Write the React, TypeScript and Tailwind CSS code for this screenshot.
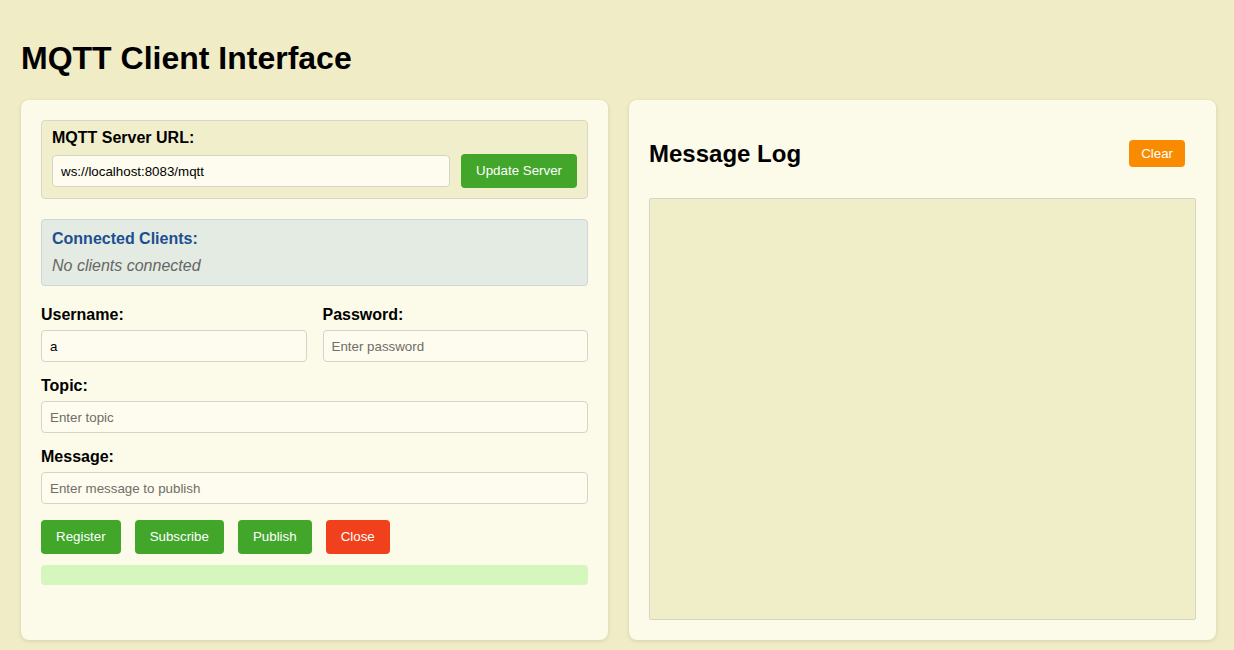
import React from "react"

const font = { fontFamily: '"Liberation Sans", Arial, sans-serif' }

function Field({ label, placeholder, value }: { label: string; placeholder?: string; value?: string }) {
  return (
    <div className="flex flex-col">
      <label className="text-[16px] font-bold leading-[18px] text-black">{label}</label>
      <input
        className="mt-[6px] h-[32px] rounded-[4px] border border-[#d6d4c6] bg-[#fdfcee] px-[8px] text-[13.33px] text-black outline-none placeholder:text-[#6f6e68]"
        placeholder={placeholder}
        defaultValue={value}
      />
    </div>
  )
}

export default function App() {
  const actions = [
    { label: "Register", color: "bg-[#41a62a]" },
    { label: "Subscribe", color: "bg-[#41a62a]" },
    { label: "Publish", color: "bg-[#41a62a]" },
    { label: "Close", color: "bg-[#f0401c]" },
  ]

  return (
    <div className="min-h-[650px] bg-[#efecc6] pl-[21px] pr-[18px] pt-[40px] pb-[11px] text-black" style={font}>
      <h1 className="mb-[23px] text-[32px] font-bold leading-[37px]">MQTT Client Interface</h1>

      <div className="grid grid-cols-2 gap-[21px]">
        {/* Left: connection + publish form */}
        <div className="rounded-[8px] bg-[#fcfbe9] p-[20px] shadow-[0_1px_4px_rgba(0,0,0,0.12)]">
          <div className="rounded-[4px] border border-[#d9d7c9] bg-[#f1eecb] px-[10px] pt-[8px] pb-[10px]">
            <div className="text-[16px] font-bold leading-[18px]">MQTT Server URL:</div>
            <div className="mt-[7px] flex items-center gap-[11px]">
              <input
                className="h-[32px] flex-1 rounded-[4px] border border-[#d6d4c6] bg-[#fdfcee] px-[8px] text-[13.33px] text-black outline-none"
                defaultValue="ws://localhost:8083/mqtt"
              />
              <button className="h-[34px] rounded-[4px] bg-[#41a62a] px-[15px] text-[13.33px] text-white">
                Update Server
              </button>
            </div>
          </div>

          <div className="mt-[20px] rounded-[4px] border border-[#ccd6da] bg-[#e3ebe2] px-[10px] pt-[10px] pb-[10px]">
            <div className="text-[16px] font-bold leading-[18px] text-[#1d4f91]">Connected Clients:</div>
            <div className="mt-[9px] text-[16px] italic leading-[18px] text-[#666]">No clients connected</div>
          </div>

          <div className="mt-[20px] grid grid-cols-2 gap-[16px]">
            <Field label="Username:" value="a" />
            <Field label="Password:" placeholder="Enter password" />
          </div>

          <div className="mt-[15px]">
            <Field label="Topic:" placeholder="Enter topic" />
          </div>

          <div className="mt-[15px]">
            <Field label="Message:" placeholder="Enter message to publish" />
          </div>

          <div className="mt-[16px] flex gap-[14px]">
            {actions.map((a) => (
              <button
                key={a.label}
                className={`h-[34px] rounded-[4px] px-[15px] text-[13.33px] text-white ${a.color}`}
              >
                {a.label}
              </button>
            ))}
          </div>

          <div className="mt-[11px] h-[20px] rounded-[4px] bg-[#d5f6bd]" />
        </div>

        {/* Right: message log */}
        <div className="rounded-[8px] bg-[#fcfbe9] p-[20px] shadow-[0_1px_4px_rgba(0,0,0,0.12)]">
          <div className="mb-[10px] flex items-center justify-between pr-[11px]">
            <h2 className="my-[20px] text-[24px] font-bold leading-[27.6px]">Message Log</h2>
            <button className="h-[27px] rounded-[4px] bg-[#f98b00] px-[12px] text-[13.33px] text-white">Clear</button>
          </div>
          <div className="h-[422px] rounded-[2px] border border-[#d6d4c6] bg-[#f0edc9]" />
        </div>
      </div>
    </div>
  )
}
